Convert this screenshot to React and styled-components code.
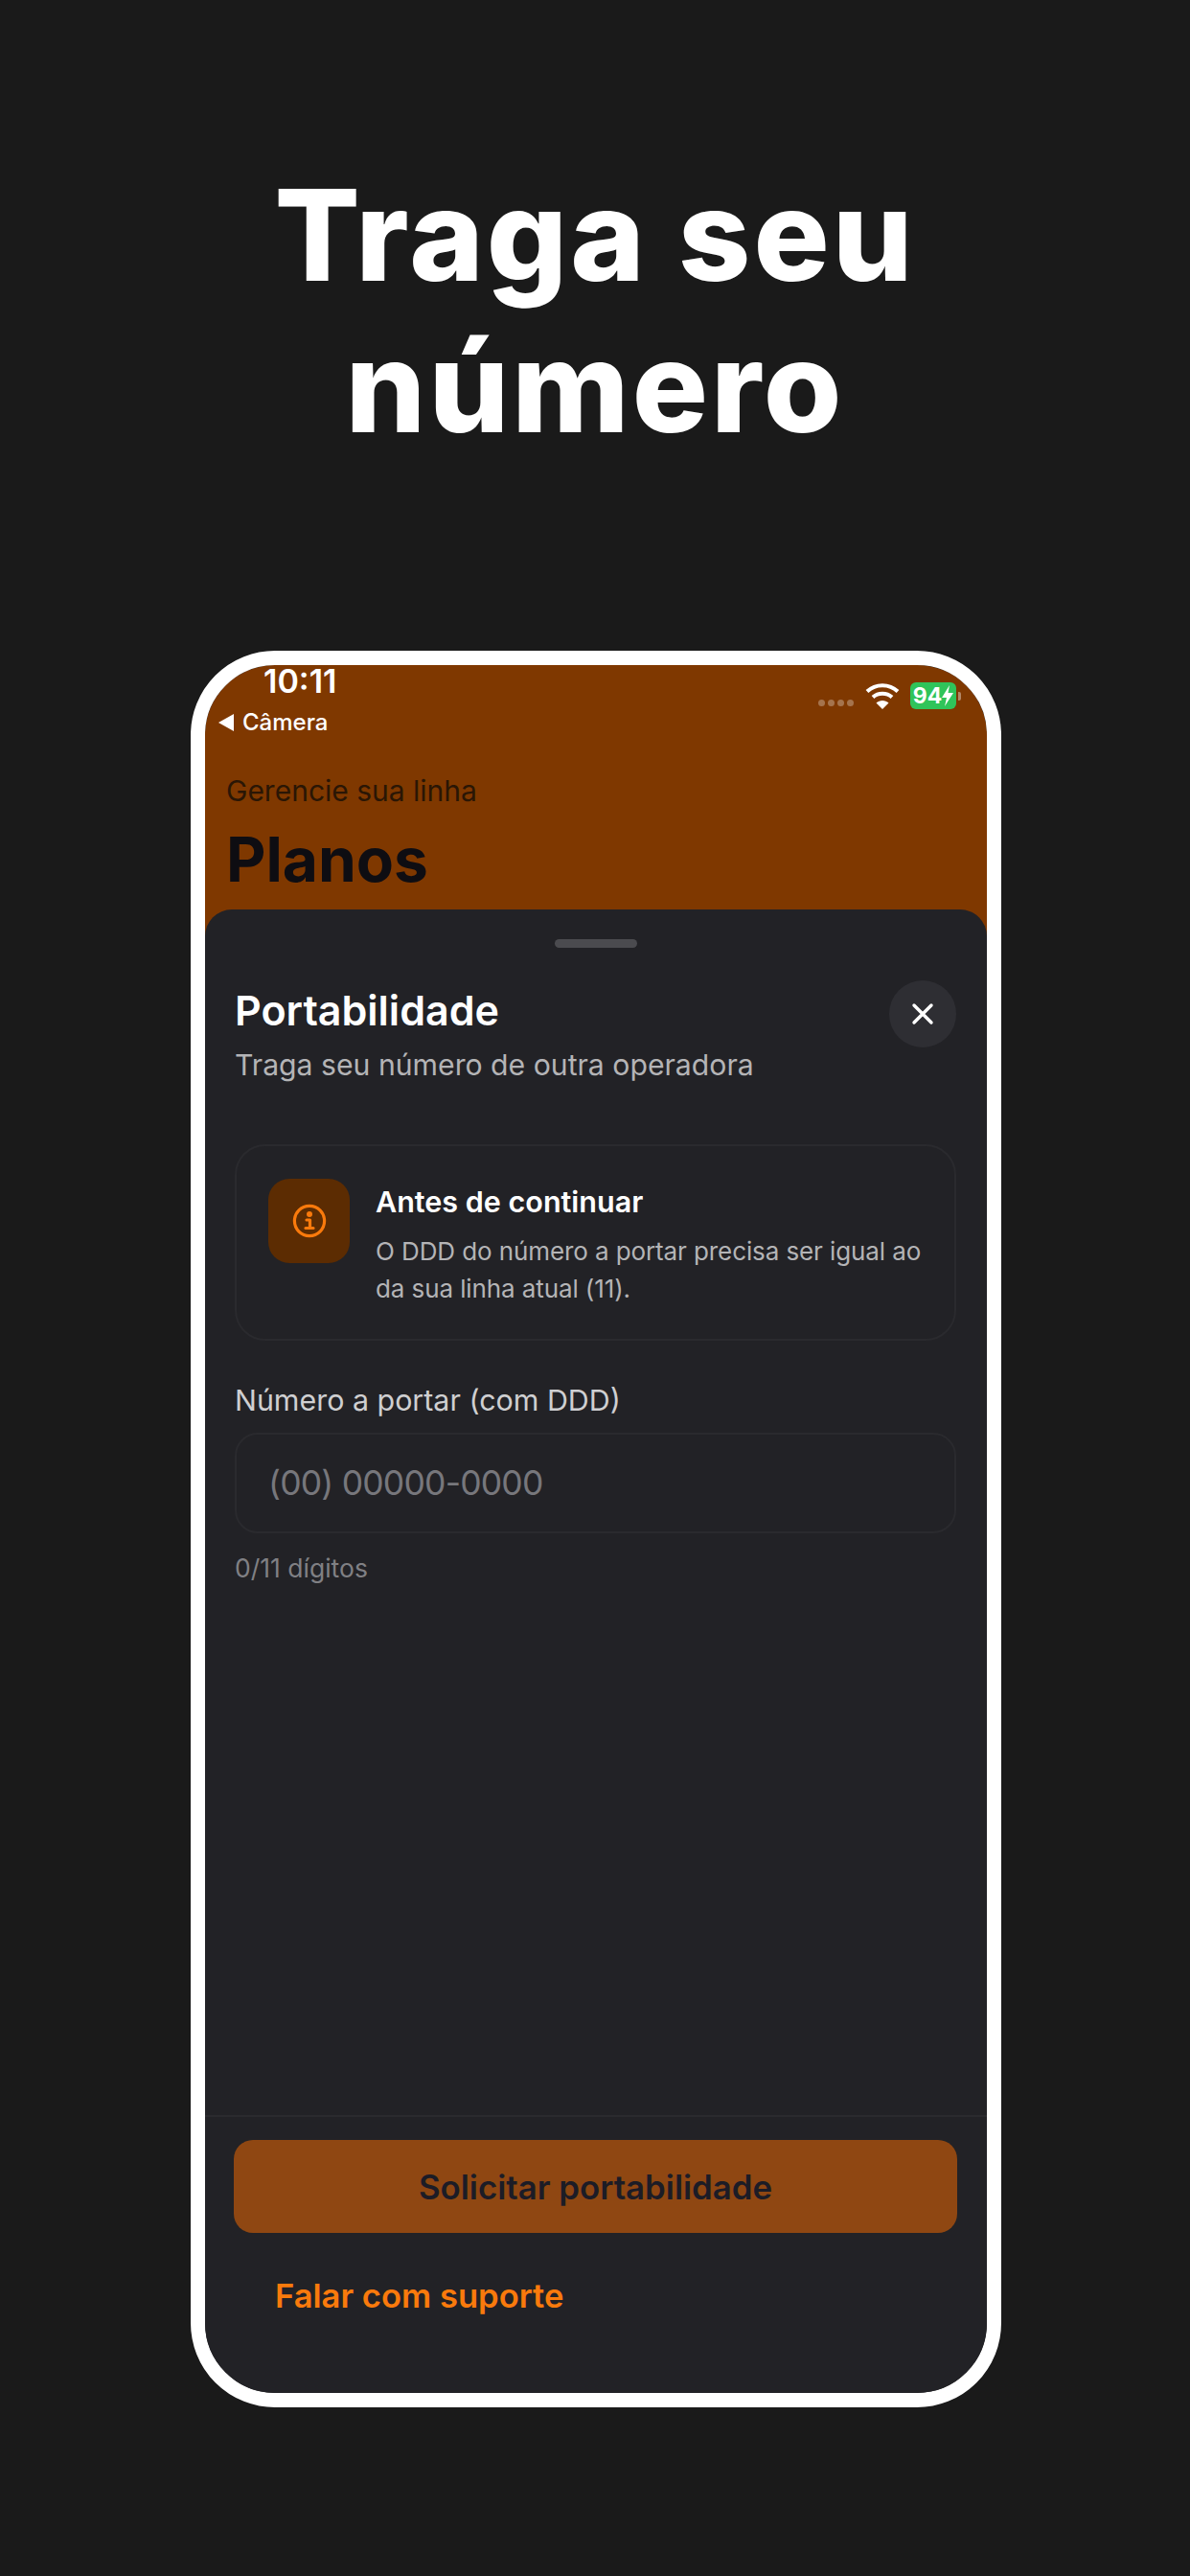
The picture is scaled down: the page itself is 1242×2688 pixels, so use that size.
import styled, { createGlobalStyle } from 'styled-components'

const GlobalStyle = createGlobalStyle`
  html, body {
    margin: 0;
    padding: 0;
    background: #1a1a1a;
  }
  * {
    box-sizing: border-box;
  }
`

const Page = styled.div`
  width: 1242px;
  height: 2688px;
  padding-top: 166px;
  background: #1a1a1a;
  display: flex;
  flex-direction: column;
  align-items: center;
  font-family: Inter, "Liberation Sans", sans-serif;
  overflow: hidden;
`

const Headline = styled.h1`
  margin: 0;
  font-size: 132px;
  line-height: 158px;
  font-weight: 800;
  letter-spacing: 3px;
  color: #fff;
  text-align: center;
`

const Phone = styled.div`
  margin: 197px 0 0 2px;
  width: 846px;
  height: 1833px;
  border: 15px solid #fff;
  border-radius: 88px;
  background: linear-gradient(#7f3800 0 300px, #222226 300px);
  background-clip: padding-box;
  overflow: hidden;
  display: flex;
  flex-direction: column;
`

const Header = styled.header`
  flex: 0 0 255px;
`

const StatusBar = styled.div`
  height: 46px;
  padding: 0 27px 0 61px;
  display: flex;
  justify-content: space-between;
  align-items: flex-start;
`

const Time = styled.span`
  font-size: 34px;
  line-height: 34px;
  font-weight: 600;
  color: #fff;
`

const StatusIcons = styled.div`
  margin-top: 18px;
  display: flex;
  align-items: center;
`

const Dots = styled.div`
  margin: 14px 12px 0 0;
  display: flex;
  gap: 3px;
`

const Dot = styled.i`
  width: 7px;
  height: 7px;
  border-radius: 50%;
  background: rgba(255, 255, 255, 0.3);
`

const Battery = styled.div`
  margin-left: 11px;
  width: 48px;
  height: 28px;
  border-radius: 6px;
  background: #2fc45a;
  color: #fff;
  font-size: 23px;
  line-height: 28px;
  font-weight: 700;
  display: flex;
  align-items: center;
  justify-content: center;
`

const BatteryNub = styled.i`
  margin-left: 2px;
  width: 3px;
  height: 9px;
  border-radius: 0 2px 2px 0;
  background: rgba(255, 255, 255, 0.4);
`

const BackLink = styled.div`
  height: 28px;
  padding-left: 14px;
  display: flex;
  align-items: center;
  gap: 9px;
  font-size: 24px;
  line-height: 28px;
  font-weight: 500;
  color: #fff;
`

const BackArrow = styled.i`
  width: 0;
  height: 0;
  border-style: solid;
  border-width: 9px 16px 9px 0;
  border-color: transparent #fff transparent transparent;
`

const Eyebrow = styled.div`
  margin: 39px 0 0 22px;
  font-size: 30px;
  line-height: 36px;
  color: #2a1605;
`

const PageTitle = styled.div`
  margin: 16px 0 0 22px;
  font-size: 64px;
  line-height: 76px;
  font-weight: 700;
  color: #0e0d12;
`

const Sheet = styled.section`
  flex: 1;
  padding-top: 31px;
  background: #222226;
  border-radius: 28px 28px 0 0;
  display: flex;
  flex-direction: column;
`

const Handle = styled.div`
  align-self: center;
  width: 86px;
  height: 9px;
  border-radius: 5px;
  background: #4b4b4f;
`

const SheetBody = styled.div`
  margin-top: 34px;
  padding: 0 32px 0 31px;
`

const TitleRow = styled.div`
  display: flex;
  justify-content: space-between;
  align-items: flex-start;
`

const TitleBlock = styled.div`
  padding-top: 6px;
`

const SheetTitle = styled.h2`
  margin: 0;
  font-size: 43px;
  line-height: 50px;
  font-weight: 600;
  color: #fff;
`

const SheetSubtitle = styled.p`
  margin: 13px 0 0;
  font-size: 30.2px;
  line-height: 38px;
  color: #b4b4b6;
`

const CloseButton = styled.button`
  width: 70px;
  height: 70px;
  padding: 0;
  border: 0;
  border-radius: 50%;
  background: #2e2e33;
  color: #fff;
  display: flex;
  align-items: center;
  justify-content: center;
`

const Notice = styled.div`
  margin-top: 64px;
  padding: 34px 33px 33px;
  border: 2px solid #2a2a2e;
  border-radius: 32px;
  display: flex;
  gap: 27px;
`

const NoticeIcon = styled.div`
  flex: 0 0 85px;
  height: 88px;
  border-radius: 22px;
  background: #5c2c02;
  color: #f97a0c;
  display: flex;
  align-items: center;
  justify-content: center;
`

const NoticeText = styled.div`
  padding-top: 6px;
`

const NoticeTitle = styled.div`
  font-size: 30.5px;
  line-height: 36px;
  font-weight: 600;
  color: #fff;
`

const NoticeBody = styled.div`
  margin-top: 14px;
  font-size: 26px;
  line-height: 39px;
  letter-spacing: -0.1px;
  color: #b4b4b6;
`

const FieldLabel = styled.label`
  display: block;
  margin-top: 43px;
  font-size: 30.4px;
  line-height: 38px;
  color: #cfcfd1;
`

const PhoneInput = styled.input`
  display: block;
  margin-top: 15px;
  width: 100%;
  height: 105px;
  padding: 0 33px;
  border: 2px solid #2a2a2e;
  border-radius: 24px;
  background: transparent;
  font-family: inherit;
  font-size: 35.5px;
  letter-spacing: -0.8px;
  color: #fff;
  outline: none;

  &::placeholder {
    color: #77777c;
    opacity: 1;
  }
`

const Hint = styled.div`
  margin-top: 20px;
  font-size: 26.5px;
  line-height: 32px;
  color: #808084;
`

const Footer = styled.footer`
  margin-top: auto;
  padding: 24px 31px 82px 30px;
  border-top: 2px solid #2a2a2e;
`

const PrimaryButton = styled.button`
  width: 100%;
  height: 97px;
  border: 0;
  border-radius: 20px;
  background: #8f4712;
  font-family: inherit;
  font-size: 34.8px;
  font-weight: 600;
  color: #1c1c26;
`

const SupportLink = styled.a`
  display: block;
  margin: 45px 0 0 43px;
  font-size: 34.6px;
  line-height: 40px;
  font-weight: 600;
  color: #f97a0c;
`

const WifiIcon = () => (
  <svg width="36" height="28" viewBox="0 0 36 28" fill="none" stroke="#fff" strokeWidth="4">
    <path d="M2 9.5C11 1 25 1 34 9.5" />
    <path d="M8 15.5C13.5 10.5 22.5 10.5 28 15.5" />
    <path d="M18 28L11.5 21.5C15 18 21 18 24.5 21.5Z" fill="#fff" stroke="none" />
  </svg>
)

const BoltIcon = () => (
  <svg width="12" height="22" viewBox="0 0 12 22" fill="#fff">
    <path d="M8 0L0 13H5L3 22L12 8H6.5Z" />
  </svg>
)

const CloseIcon = () => (
  <svg width="26" height="26" viewBox="0 0 26 26" fill="none" stroke="currentColor" strokeWidth="3.4" strokeLinecap="round">
    <path d="M4 4L22 22M22 4L4 22" />
  </svg>
)

const InfoIcon = () => (
  <svg width="36" height="36" viewBox="0 0 36 36" fill="none" stroke="currentColor" strokeWidth="3.2" strokeLinecap="round" strokeLinejoin="round">
    <circle cx="18" cy="18" r="15.6" />
    <path d="M15 17H18.5V25M14 25.5H22" />
    <circle cx="18" cy="11" r="1.4" fill="currentColor" />
  </svg>
)

export default function App() {
  return (
    <>
      <GlobalStyle />
      <Page>
        <Headline>Traga seu<br />número</Headline>
        <Phone>
          <Header>
            <StatusBar>
              <Time>10:11</Time>
              <StatusIcons>
                <Dots><Dot /><Dot /><Dot /><Dot /></Dots>
                <WifiIcon />
                <Battery>94<BoltIcon /></Battery>
                <BatteryNub />
              </StatusIcons>
            </StatusBar>
            <BackLink><BackArrow />Câmera</BackLink>
            <Eyebrow>Gerencie sua linha</Eyebrow>
            <PageTitle>Planos</PageTitle>
          </Header>
          <Sheet>
            <Handle />
            <SheetBody>
              <TitleRow>
                <TitleBlock>
                  <SheetTitle>Portabilidade</SheetTitle>
                  <SheetSubtitle>Traga seu número de outra operadora</SheetSubtitle>
                </TitleBlock>
                <CloseButton aria-label="Fechar"><CloseIcon /></CloseButton>
              </TitleRow>
              <Notice>
                <NoticeIcon><InfoIcon /></NoticeIcon>
                <NoticeText>
                  <NoticeTitle>Antes de continuar</NoticeTitle>
                  <NoticeBody>O DDD do número a portar precisa ser igual ao da sua linha atual (11).</NoticeBody>
                </NoticeText>
              </Notice>
              <FieldLabel htmlFor="numero">Número a portar (com DDD)</FieldLabel>
              <PhoneInput id="numero" placeholder="(00) 00000-0000" readOnly />
              <Hint>0/11 dígitos</Hint>
            </SheetBody>
            <Footer>
              <PrimaryButton>Solicitar portabilidade</PrimaryButton>
              <SupportLink>Falar com suporte</SupportLink>
            </Footer>
          </Sheet>
        </Phone>
      </Page>
    </>
  )
}
